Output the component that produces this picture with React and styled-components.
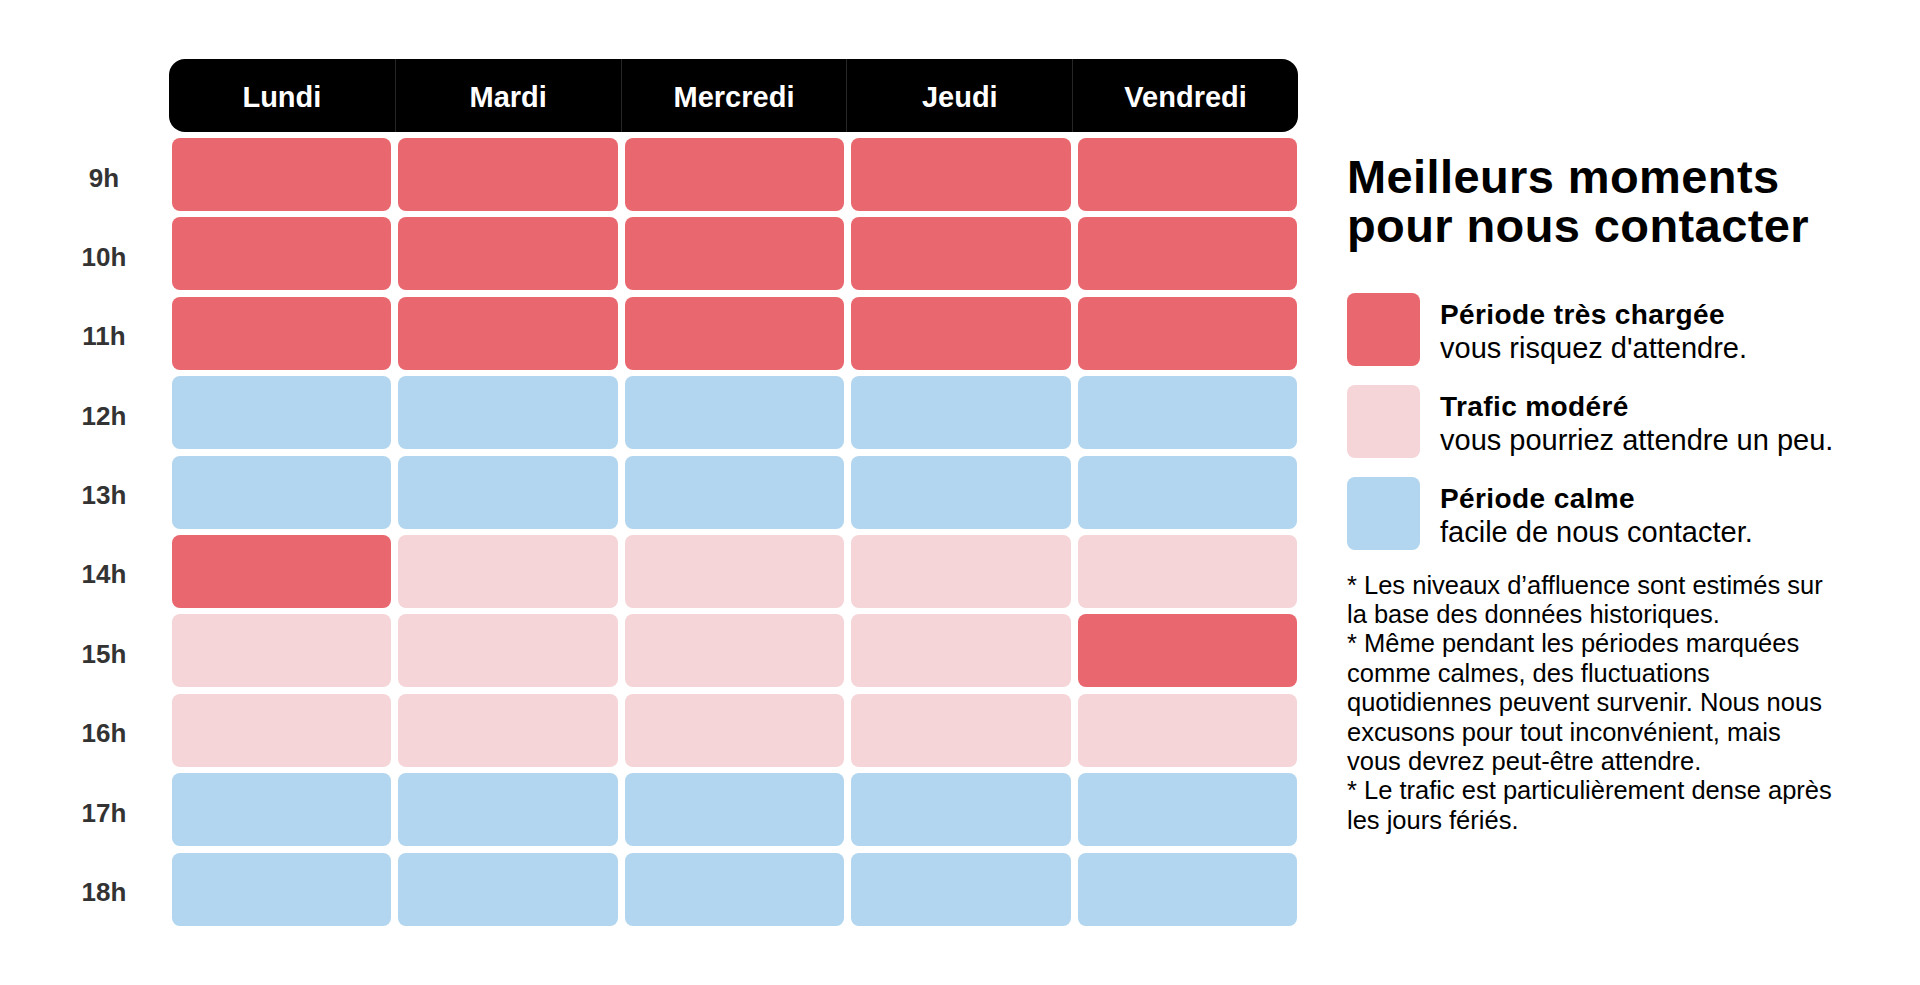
import React from 'react';
import styled, { createGlobalStyle } from 'styled-components';

// Couleurs du planning
const colors = {
  busy: '#e9676f',
  mid: '#f5d5d8',
  calm: '#b2d6ef',
};

const GlobalStyle = createGlobalStyle`
  html, body {
    margin: 0;
    padding: 0;
    background: #ffffff;
  }
  body {
    font-family: "Liberation Sans", Arial, sans-serif;
    color: #000;
  }
`;

const Page = styled.div`
  display: flex;
  align-items: flex-start;
  gap: 49px;
  padding: 59px 0 0 64px;
`;

const Schedule = styled.div`
  display: flex;
  flex-direction: column;
`;

const HeaderRow = styled.div`
  display: flex;
  padding-left: 105px;
`;

const DaysBar = styled.div`
  display: grid;
  grid-template-columns: repeat(5, 1fr);
  width: 1129px;
  height: 73px;
  background: #000;
  border-radius: 16px;
  overflow: hidden;
`;

const Day = styled.div`
  display: flex;
  align-items: center;
  justify-content: center;
  padding-top: 4px;
  color: #fff;
  font-size: 29px;
  font-weight: 700;
  border-left: ${(p) => (p.first ? 'none' : '1px solid #262626')};
`;

const Body = styled.div`
  display: flex;
  flex-direction: column;
  gap: 6.4px;
  margin-top: 6px;
`;

const Row = styled.div`
  display: flex;
  align-items: center;
`;

const Hour = styled.div`
  width: 80px;
  margin-right: 28px;
  padding-top: 7px;
  text-align: center;
  font-size: 26px;
  font-weight: 700;
  color: #333;
`;

const Cells = styled.div`
  display: grid;
  grid-template-columns: repeat(5, 1fr);
  gap: 7px;
  width: 1125px;
`;

const Cell = styled.div`
  height: 73px;
  border-radius: 8px;
  background: ${(p) => colors[p.level]};
`;

const Side = styled.aside`
  width: 520px;
  margin-top: 93px;
`;

const Title = styled.h1`
  margin: 0;
  font-size: 47px;
  line-height: 49px;
  font-weight: 700;
  letter-spacing: 0.4px;
`;

const Legend = styled.div`
  display: flex;
  flex-direction: column;
  gap: 19px;
  margin-top: 42.5px;
`;

const LegendItem = styled.div`
  display: flex;
  align-items: flex-start;
  gap: 20px;
`;

const Swatch = styled.div`
  width: 73px;
  height: 73px;
  flex-shrink: 0;
  border-radius: 8px;
  background: ${(p) => colors[p.level]};
`;

const LegendText = styled.div`
  display: flex;
  flex-direction: column;
  padding-top: 5px;
`;

const LegendLabel = styled.div`
  font-size: 28px;
  line-height: 33px;
  font-weight: 700;
  letter-spacing: 0.4px;
`;

const LegendHint = styled.div`
  font-size: 29px;
  line-height: 35px;
`;

const Notes = styled.p`
  margin: 21px 0 0;
  font-size: 25.5px;
  line-height: 29.4px;
  white-space: nowrap;
`;

const days = ['Lundi', 'Mardi', 'Mercredi', 'Jeudi', 'Vendredi'];

// b = très chargé, m = modéré, c = calme
const grid = [
  ['9h', 'bbbbb'],
  ['10h', 'bbbbb'],
  ['11h', 'bbbbb'],
  ['12h', 'ccccc'],
  ['13h', 'ccccc'],
  ['14h', 'bmmmm'],
  ['15h', 'mmmmb'],
  ['16h', 'mmmmm'],
  ['17h', 'ccccc'],
  ['18h', 'ccccc'],
];

const levelOf = { b: 'busy', m: 'mid', c: 'calm' };

const legend = [
  { level: 'busy', label: 'Période très chargée', hint: "vous risquez d'attendre." },
  { level: 'mid', label: 'Trafic modéré', hint: 'vous pourriez attendre un peu.' },
  { level: 'calm', label: 'Période calme', hint: 'facile de nous contacter.' },
];

const App = () => {
  return (
    <>
      <GlobalStyle />
      <Page>
        <Schedule>
          <HeaderRow>
            <DaysBar>
              {days.map((d, i) => (
                <Day key={d} first={i === 0}>{d}</Day>
              ))}
            </DaysBar>
          </HeaderRow>
          <Body>
            {grid.map(([hour, levels]) => (
              <Row key={hour}>
                <Hour>{hour}</Hour>
                <Cells>
                  {levels.split('').map((l, i) => (
                    <Cell key={i} level={levelOf[l]} />
                  ))}
                </Cells>
              </Row>
            ))}
          </Body>
        </Schedule>

        <Side>
          <Title>
            Meilleurs moments
            <br />
            pour nous contacter
          </Title>
          <Legend>
            {legend.map((item) => (
              <LegendItem key={item.level}>
                <Swatch level={item.level} />
                <LegendText>
                  <LegendLabel>{item.label}</LegendLabel>
                  <LegendHint>{item.hint}</LegendHint>
                </LegendText>
              </LegendItem>
            ))}
          </Legend>
          <Notes>
            * Les niveaux d’affluence sont estimés sur
            <br />
            la base des données historiques.
            <br />
            * Même pendant les périodes marquées
            <br />
            comme calmes, des fluctuations
            <br />
            quotidiennes peuvent survenir. Nous nous
            <br />
            excusons pour tout inconvénient, mais
            <br />
            vous devrez peut-être attendre.
            <br />
            * Le trafic est particulièrement dense après
            <br />
            les jours fériés.
          </Notes>
        </Side>
      </Page>
    </>
  );
};

export default App;
